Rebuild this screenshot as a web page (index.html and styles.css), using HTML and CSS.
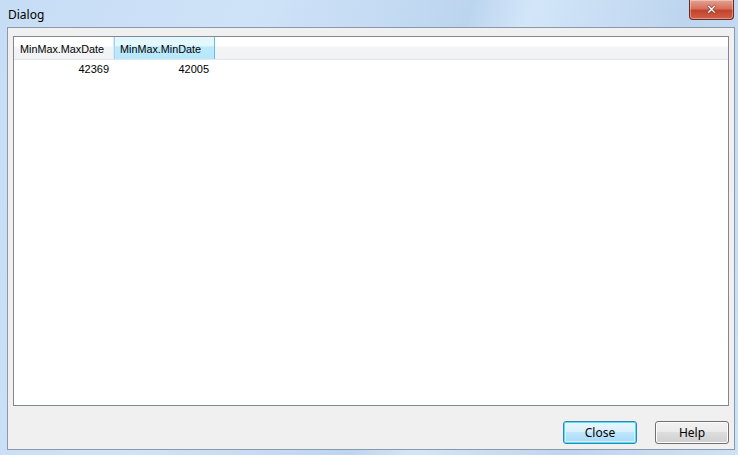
FILE: index.html
```html
<!DOCTYPE html>
<html>
<head>
<meta charset="utf-8">
<link rel="stylesheet" href="styles.css">
</head>
<body>
<div class="window">
  <div class="titlebar">
    <span class="title">Dialog</span>
    <div class="closebtn"><span class="xglyph">✕</span></div>
  </div>
  <div class="client">
    <div class="grid">
      <div class="header">
        <div class="hcell">MinMax.MaxDate</div>
        <div class="hcell hot">MinMax.MinDate</div>
      </div>
      <div class="row">
        <div class="cell">42369</div>
        <div class="cell">42005</div>
      </div>
    </div>
    <div class="buttons">
      <button class="btn default">Close</button>
      <button class="btn">Help</button>
    </div>
  </div>
</div>
</body>
</html>
```
FILE: styles.css
```css
html, body {
  margin: 0;
  padding: 0;
}
body {
  width: 738px;
  height: 455px;
  overflow: hidden;
  font-family: "Open Sans", "Noto Sans", sans-serif;
}
.window {
  width: 738px;
  height: 455px;
  box-sizing: border-box;
  background: linear-gradient(105deg, #c6ddf5 0%, #cfe3f8 30%, #bcd5ef 55%, #d3e6f9 62%, #bdd5ee 80%, #cde2f7 100%);
  display: flex;
  flex-direction: column;
  padding: 0 3px 5px 7px;
}
.titlebar {
  height: 28px;
  display: flex;
  justify-content: space-between;
  align-items: flex-start;
  margin-left: 1px;
}
.title {
  font-family: "Noto Sans", sans-serif;
  font-size: 12px;
  color: #000;
  margin-top: 6px;
}
.closebtn {
  width: 43px;
  height: 19px;
  margin-right: 1px;
  border: 1px solid #6b2a24;
  border-top: none;
  border-radius: 0 0 4px 4px;
  background: linear-gradient(#e3a293 0%, #d7705d 45%, #c4432b 55%, #d0604a 100%);
  display: flex;
  align-items: center;
  justify-content: center;
  box-shadow: inset 0 0 0 1px rgba(255,255,255,0.35);
}
.xglyph {
  color: #fff;
  font-family: "DejaVu Sans", sans-serif;
  font-weight: bold;
  font-size: 13px;
  text-shadow: 0 0 1px #5a2520, 0 0 1px #5a2520, 0 0 1px #5a2520;
  margin-top: -1px;
}
.client {
  flex: 1;
  background: #f0f0f0;
  border: 1px solid #8a98a8;
  display: flex;
  flex-direction: column;
  padding: 8px 5px 5px 5px;
}
.grid {
  height: 370px;
  flex: none;
  box-sizing: border-box;
  border: 1px solid #828790;
  background: #fff;
}
.header {
  height: 22px;
  display: flex;
  background: linear-gradient(#ffffff 0%, #ffffff 40%, #f4f5f7 45%, #f1f2f4 100%);
  border-bottom: 1px solid #e3e6ea;
}
.hcell {
  width: 100px;
  box-sizing: border-box;
  font-family: "Liberation Sans", sans-serif;
  font-size: 10.8px;
  color: #000;
  padding: 6px 0 0 6px;
  border-right: 1px solid #e3e6ea;
}
.hcell.hot {
  width: 101px;
  background: linear-gradient(#e3f7ff 0%, #e3f7ff 40%, #bde9fc 45%, #b7e7fb 100%);
  border-left: 1px solid #96d9f9;
  border-right: 1px solid #69bbe3;
  padding-left: 5px;
}
.row {
  display: flex;
  height: 18px;
}
.cell {
  width: 100px;
  box-sizing: border-box;
  text-align: right;
  font-family: "Liberation Sans", sans-serif;
  font-size: 11px;
  padding: 3px 5px 0 0;
}
.buttons {
  display: flex;
  justify-content: flex-end;
  gap: 18px;
  margin-top: 15px;
}
.btn {
  width: 74px;
  height: 23px;
  box-sizing: border-box;
  margin: 0;
  padding: 0;
  border: 1px solid #707070;
  border-radius: 3px;
  background: linear-gradient(#f2f2f2 0%, #ebebeb 45%, #dddddd 50%, #cfcfcf 100%);
  font-family: "Noto Sans", sans-serif;
  font-size: 12px;
  color: #000;
  box-shadow: inset 0 0 0 1px #fcfcfc;
}
.btn.default {
  border-color: #3c7fb1;
  background: linear-gradient(#eaf6fd 0%, #d9f0fc 45%, #bee6fd 50%, #a7d9f5 100%);
  box-shadow: inset 0 0 0 1px #47e6ff, inset 0 0 0 2px rgba(255,255,255,0.5);
}
```
